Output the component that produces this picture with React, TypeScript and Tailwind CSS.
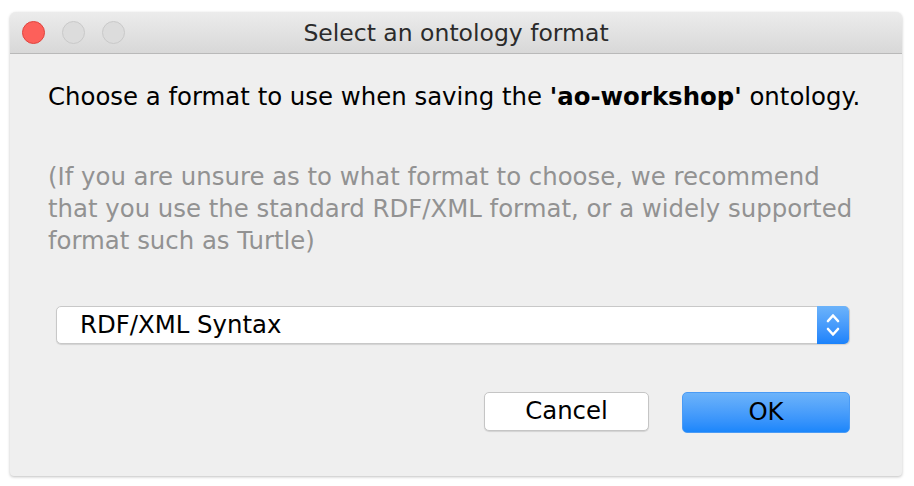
const Stepper = () => (
  <svg width="14" height="26" viewBox="0 0 14 26" fill="none" stroke="white" strokeWidth="2.6" strokeLinecap="round" strokeLinejoin="round">
    <path d="M2 9 L7 3.5 L12 9" />
    <path d="M2 17 L7 22.5 L12 17" />
  </svg>
);

const App = () => {
  return (
    <div className="h-[486px] w-[914px] bg-white pl-[10px] pt-[12px] font-['DejaVu_Sans',sans-serif]">
      <div className="flex h-[464px] w-[892px] flex-col overflow-hidden rounded-t-[6px] rounded-b-[4px] bg-[#efefef] shadow-[0_1px_3px_rgba(0,0,0,0.25)]">
        {/* title bar */}
        <div className="relative flex h-[42px] shrink-0 items-center border-b border-[#b9b9b9] bg-gradient-to-b from-[#ececec] to-[#d8d8d8]">
          <div className="flex gap-[17px] pl-[12px]">
            <span className="h-[23px] w-[23px] rounded-full border border-[#e0443e] bg-[#fd605a]"></span>
            <span className="h-[23px] w-[23px] rounded-full border border-[#c9c9c9] bg-[#dcdcdc]"></span>
            <span className="h-[23px] w-[23px] rounded-full border border-[#c9c9c9] bg-[#dcdcdc]"></span>
          </div>
          <div className="absolute inset-0 flex items-center justify-center pt-[2px] text-[23.5px] text-[#2b2b2b]">
            Select an ontology format
          </div>
        </div>

        {/* content */}
        <div className="flex flex-col pl-[38px] pr-[30px]">
          <p className="mt-[27px] text-[24.4px] leading-[32px] text-black">
            Choose a format to use when saving the <b>'ao-workshop'</b> ontology.
          </p>
          <p className="mt-[48px] w-[815px] text-[24.4px] leading-[32px] text-[#929292]">
            (If you are unsure as to what format to choose, we recommend that you use the standard RDF/XML format, or a widely supported format such as Turtle)
          </p>

          <div className="ml-[8px] mt-[49px] flex h-[38px] w-[794px] items-center rounded-[5px] border border-[#c8c8c8] bg-white shadow-[0_1px_1px_rgba(0,0,0,0.12)]">
            <span className="flex-1 pl-[23px] text-[24.4px] text-black">RDF/XML Syntax</span>
            <span className="flex h-[38px] w-[32px] items-center justify-center rounded-r-[5px] bg-gradient-to-b from-[#6cb3fa] to-[#1a82fb]">
              <Stepper />
            </span>
          </div>

          <div className="mt-[48px] flex justify-end gap-[33px] pr-[22px]">
            <button className="h-[39px] w-[165px] rounded-[5px] border border-[#c5c5c5] bg-white text-[24.4px] text-black shadow-[0_1px_1px_rgba(0,0,0,0.12)]">
              Cancel
            </button>
            <button className="h-[41px] w-[168px] rounded-[5px] border border-[#4a9bf5] bg-gradient-to-b from-[#6cb3fa] to-[#1a86fb] text-[24.4px] text-black">
              OK
            </button>
          </div>
        </div>
      </div>
    </div>
  );
};

export default App;
